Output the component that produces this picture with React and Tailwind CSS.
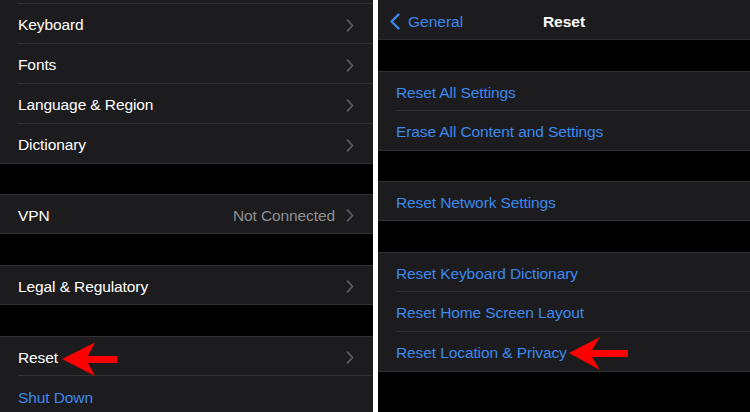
import React from 'react';

const BLUE = 'text-[#3b88ee]';

const Chevron = () => (
  <svg width="8" height="13" viewBox="0 0 8 13" className="shrink-0">
    <path d="M1.5 1.2 L6.5 6.5 L1.5 11.8" fill="none" stroke="#5c5c60" strokeWidth="1.8" strokeLinecap="round" strokeLinejoin="round" />
  </svg>
);

// one table row; the separator is inset like iOS unless `last`
const Row = ({ label, blue, detail, chevron, last, h = 'h-10', children }) => (
  <div className={`relative ${h} flex pl-[18px] bg-[#1c1c1e]`}>
    <div className={`flex-1 flex items-center pt-[3px] pr-[19px] ${last ? '' : 'border-b border-[#323234]'}`}>
      <span className={`flex-1 text-[15.5px] tracking-[-0.1px] ${blue ? BLUE : 'text-white'}`}>{label}</span>
      {detail && <span className="text-[15.5px] tracking-[-0.1px] text-[#8e8e93] mr-[11px]">{detail}</span>}
      {chevron && <Chevron />}
    </div>
    {children}
  </div>
);

const Group = ({ children }) => (
  <div className="border-y border-[#323234]">{children}</div>
);

const LeftArrow = () => (
  <svg className="absolute left-0 top-0" width="130" height="40" viewBox="0 0 130 40">
    <polygon points="62,22 95,5.5 88,19 117,19 117,26 88,26 95,39" fill="#ff0000" />
  </svg>
);

const RightArrow = () => (
  <svg className="absolute left-0 top-0" width="260" height="40" viewBox="0 0 260 40">
    <polygon points="191,21 222,5 214,18 250,18 250,25 214,25 222,38" fill="#ff0000" />
  </svg>
);

export default function App() {
  return (
    <div className="w-[750px] h-[412px] flex bg-white overflow-hidden" style={{ fontFamily: '"Liberation Sans", Arial, sans-serif' }}>
      {/* ===== General (scrolled) ===== */}
      <div className="w-[373px] h-full bg-black overflow-hidden">
        <div className="h-[4px] pl-[18px] bg-[#1c1c1e]">
          <div className="h-full border-b border-[#323234]" />
        </div>
        <Row label="Keyboard" chevron />
        <Row label="Fonts" chevron />
        <Row label="Language & Region" chevron />
        <Row label="Dictionary" chevron last h="h-[39px]" />
        <div className="h-[31px] border-t border-[#323234]" />
        <Group>
          <Row label="VPN" detail="Not Connected" chevron last h="h-[38px]" />
        </Group>
        <div className="h-[31px]" />
        <Group>
          <Row label="Legal & Regulatory" chevron last h="h-[38px]" />
        </Group>
        <div className="h-[31px]" />
        <div className="border-t border-[#323234]">
          <Row label="Reset" chevron h="h-[39px]">
            <LeftArrow />
          </Row>
          <Row label="Shut Down" blue last />
        </div>
      </div>

      <div className="w-[5px] bg-white" />

      {/* ===== Reset ===== */}
      <div className="flex-1 h-full bg-black overflow-hidden">
        <div className="relative h-10 pt-[4px] bg-[#1c1c1e] border-b border-[#2a2a2c] flex items-center">
          <div className="flex items-center pl-[11px] gap-[7px]">
            <svg width="12" height="17" viewBox="0 0 12 17">
              <path d="M9.5 1.5 L2.5 8.5 L9.5 15.5" fill="none" stroke="#3b88ee" strokeWidth="2.4" strokeLinecap="round" strokeLinejoin="round" />
            </svg>
            <span className={`text-[15.5px] ${BLUE}`}>General</span>
          </div>
          <span className="absolute inset-x-0 text-center text-[15.5px] font-bold text-white pointer-events-none">Reset</span>
        </div>
        <div className="h-[31px]" />
        <div className="border-t border-[#323234]">
          <Row label="Reset All Settings" blue h="h-[39px]" />
          <Row label="Erase All Content and Settings" blue last h="h-[39px]" />
        </div>
        <div className="h-[31px] border-t border-[#323234]" />
        <Group>
          <Row label="Reset Network Settings" blue last h="h-[38px]" />
        </Group>
        <div className="h-[31px]" />
        <Group>
          <Row label="Reset Keyboard Dictionary" blue h="h-[39px]" />
          <Row label="Reset Home Screen Layout" blue h="h-10" />
          <Row label="Reset Location & Privacy" blue last h="h-[39px]">
            <RightArrow />
          </Row>
        </Group>
      </div>
    </div>
  );
}
